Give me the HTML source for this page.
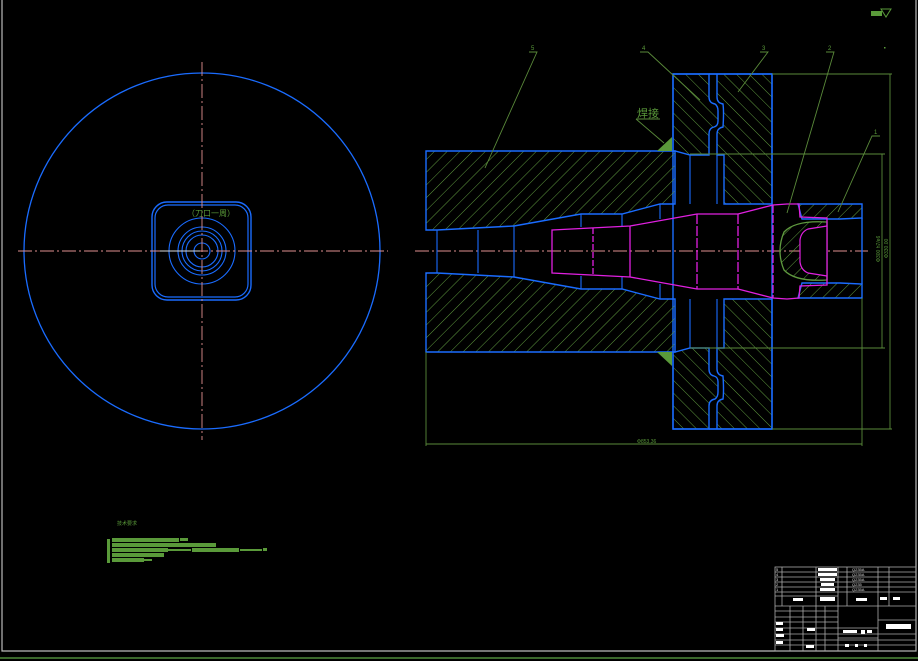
<!DOCTYPE html>
<html><head><meta charset="utf-8"><style>
html,body{margin:0;padding:0;background:#000;width:918px;height:661px;overflow:hidden}
svg{display:block}
text{font-family:"Liberation Sans","Noto Sans CJK SC",sans-serif}
</style></head><body>
<svg width="918" height="661" viewBox="0 0 918 661" xmlns="http://www.w3.org/2000/svg">
<defs>
<pattern id="h" patternUnits="userSpaceOnUse" width="9" height="9" patternTransform="rotate(45)">
<line x1="0" y1="0" x2="0" y2="9" stroke="#5f9a3f" stroke-width="1"/>
</pattern>
<pattern id="h2" patternUnits="userSpaceOnUse" width="9" height="9" patternTransform="rotate(-45)">
<line x1="0" y1="0" x2="0" y2="9" stroke="#5f9a3f" stroke-width="1"/>
</pattern>
</defs>
<rect width="918" height="661" fill="#000"/>
<polyline points="2,0 2,651 916,651 916,0" fill="none" stroke="#bbb" stroke-width="1.2"/>
<line x1="0" y1="658" x2="918" y2="658" stroke="#4f8a3a" stroke-width="1.5"/>

<circle cx="202" cy="251" r="178" fill="none" stroke="#1a6cff" stroke-width="1.3"/>
<rect x="152" y="202" width="99" height="98" rx="15" fill="none" stroke="#1a6cff" stroke-width="1.4"/>
<rect x="155" y="205" width="93" height="92" rx="13" fill="none" stroke="#1a6cff" stroke-width="1.2"/>
<g fill="none" stroke="#1a6cff" stroke-width="1.1">
<circle cx="202" cy="251" r="33"/><circle cx="202" cy="251" r="24"/><circle cx="202" cy="251" r="20"/><circle cx="202" cy="251" r="16"/><circle cx="202" cy="251" r="8"/>
</g>
<line x1="18" y1="251" x2="388" y2="251" stroke="#e09090" stroke-width="0.9" stroke-dasharray="14,3,2,3"/>
<line x1="202" y1="62" x2="202" y2="440" stroke="#e09090" stroke-width="0.9" stroke-dasharray="14,3,2,3"/>
<line x1="160" y1="251" x2="200" y2="251" stroke="#ddd" stroke-width="1"/>
<text x="187" y="216" font-size="8" fill="#5a9a3a">（刀口一周）</text>

<line x1="415" y1="251" x2="868" y2="251" stroke="#e09090" stroke-width="0.9" stroke-dasharray="14,3,2,3"/>
<g stroke="#1a6cff" stroke-width="1.4">
<path d="M673,74 H709 V97 Q709,103 715,104 Q718,106 718,111 V121 Q718,126 714,127 Q709,128 709,134 V155 H690 L675,151 H673 Z" fill="url(#h2)"/>
<path d="M709,74 H772 V204 H724 V155 H717 V134 Q717,128 723,127 Q724,112 723,104 Q717,103 717,97 V74 Z" fill="url(#h2)"/>
<path d="M673,429 H709 V406 Q709,400 715,399 Q718,397 718,392 V382 Q718,377 714,376 Q709,375 709,369 V348 H690 L675,352 H673 Z" fill="url(#h2)"/>
<path d="M709,429 H772 V299 H724 V348 H717 V369 Q717,375 723,376 Q724,391 723,399 Q717,400 717,406 V429 Z" fill="url(#h2)"/>
<rect x="673" y="74" width="99" height="355" fill="none"/>
</g>
<g stroke="#1a6cff" stroke-width="1.4" fill="url(#h)">
<path d="M426,151 H675 V204 H660 L622,214 H581 L514,226 L437,230 H426 Z"/>
<path d="M426,352 H675 V299 H660 L622,289 H581 L514,277 L437,273 H426 Z"/>
</g>
<g stroke="#1a6cff" stroke-width="1.1" fill="none">
<line x1="437" y1="230" x2="437" y2="273"/><line x1="478" y1="230" x2="478" y2="273"/><line x1="514" y1="226" x2="514" y2="277"/>
<line x1="581" y1="214" x2="581" y2="227"/><line x1="581" y1="276" x2="581" y2="289"/>
<line x1="622" y1="214" x2="622" y2="227"/><line x1="622" y1="276" x2="622" y2="289"/>
<line x1="660" y1="204" x2="660" y2="219"/><line x1="660" y1="284" x2="660" y2="299"/>
<line x1="675" y1="155" x2="675" y2="204"/><line x1="675" y1="299" x2="675" y2="348"/>
<line x1="690" y1="155" x2="690" y2="204"/><line x1="690" y1="299" x2="690" y2="348"/>
<line x1="717" y1="155" x2="717" y2="204"/><line x1="717" y1="299" x2="717" y2="348"/>
<line x1="724" y1="204" x2="772" y2="204"/>
</g>
<g stroke="#1a6cff" stroke-width="1.4">
<path d="M798,204 H862 V218 L840,219 H802 Z" fill="url(#h)"/>
<path d="M798,298 H862 V284 L840,283 H802 Z" fill="url(#h)"/>
<line x1="862" y1="218" x2="862" y2="284"/>
</g>
<path d="M827,222 Q795,220 784,232 Q776,251 784,270 Q795,282 827,280 Z" fill="url(#h)" stroke="#5f9a3f" stroke-width="1.3"/>
<path d="M827,226 L808,229 Q801,232 800,240 V262 Q801,270 808,273 L827,276" fill="#000" stroke="#e020e0" stroke-width="1.2"/>
<g stroke="#e020e0" stroke-width="1.3" fill="none">
<path d="M552,230 L630,226 L697,214 L738,214 L773,205 L787,204 L799,204 L800,217 L827,218 V285 L800,286 L799,298 L787,299 L773,298 L738,289 L697,289 L630,277 L552,273 Z"/>
<line x1="593" y1="228" x2="593" y2="275" stroke-dasharray="6,2"/>
<line x1="630" y1="226" x2="630" y2="277"/>
<line x1="697" y1="214" x2="697" y2="289" stroke-dasharray="10,2"/>
<line x1="738" y1="214" x2="738" y2="289" stroke-dasharray="10,2"/>
<line x1="773" y1="205" x2="773" y2="298" stroke-dasharray="8,2"/>
</g>
<polygon points="657,151 672,151 672,137" fill="#5a9a3a"/>
<polygon points="657,352 672,352 672,366" fill="#5a9a3a"/>
<text x="637" y="117" font-size="11" fill="#5a9a3a">焊接</text>
<g stroke="#5a8a3a" stroke-width="0.9" fill="none">
<line x1="636" y1="119" x2="660" y2="119"/><line x1="636" y1="119" x2="664" y2="143"/>
<polyline points="529,52 537,52 485,168"/><polyline points="640,52 648,52 700,100"/>
<polyline points="760,52 768,52 738,92"/><polyline points="826,52 834,52 787,213"/>
<polyline points="880,136 872,136 838,212"/>
<line x1="772" y1="74" x2="892" y2="74"/><line x1="772" y1="429" x2="892" y2="429"/>
<line x1="890" y1="74" x2="890" y2="429"/>
<line x1="690" y1="154" x2="885" y2="154"/><line x1="690" y1="348" x2="885" y2="348"/>
<line x1="882" y1="154" x2="882" y2="348"/>
<line x1="426" y1="352" x2="426" y2="446"/><line x1="862" y1="298" x2="862" y2="446"/>
<line x1="426" y1="444" x2="862" y2="444"/>
</g>
<g fill="#5a9a3a" font-size="6">
<text x="531" y="50">5</text><text x="642" y="50">4</text><text x="762" y="50">3</text><text x="828" y="50">2</text><text x="874" y="134">1</text>
<text x="637" y="443" font-size="5">Φ853.36</text>
</g>
<text x="0" y="0" font-size="5" fill="#5a9a3a" transform="translate(880,262) rotate(-90)">Φ300 h7/e6</text>
<text x="0" y="0" font-size="5" fill="#5a9a3a" transform="translate(888,258) rotate(-90)">Φ330.00</text>

<rect x="871" y="11" width="11" height="5" fill="#5a9a3a"/>
<path d="M881,9 L891,9 L886,17 Z" fill="none" stroke="#5a9a3a" stroke-width="1"/>
<rect x="884" y="47" width="1.5" height="1.5" fill="#5a9a3a"/>

<text x="117" y="525" font-size="5" fill="#5a9a3a">技术要求</text>
<g fill="#5a9a3a">
<rect x="112" y="538" width="67" height="4"/><rect x="180" y="538" width="8" height="3"/>
<rect x="112" y="543" width="104" height="4"/>
<rect x="112" y="548" width="56" height="4"/><rect x="168" y="549" width="23" height="2"/><rect x="192" y="548" width="47" height="4"/><rect x="240" y="549" width="22" height="2"/><rect x="263" y="548" width="4" height="3"/>
<rect x="112" y="553" width="52" height="4"/>
<rect x="112" y="558" width="32" height="4"/><rect x="144" y="559" width="8" height="2"/>
<rect x="107" y="539" width="3" height="24"/>
</g>

<g stroke="#aaa" stroke-width="0.8" fill="none">
<rect x="775" y="567" width="141" height="84"/>
<line x1="775" y1="572" x2="916" y2="572"/><line x1="775" y1="577" x2="916" y2="577"/><line x1="775" y1="582" x2="916" y2="582"/>
<line x1="775" y1="587" x2="916" y2="587"/><line x1="775" y1="592" x2="916" y2="592"/><line x1="775" y1="596" x2="838" y2="596"/>
<line x1="775" y1="606" x2="916" y2="606"/><line x1="775" y1="611" x2="838" y2="611"/><line x1="775" y1="617" x2="838" y2="617"/>
<line x1="775" y1="622" x2="838" y2="622"/><line x1="775" y1="628" x2="838" y2="628"/><line x1="775" y1="634" x2="916" y2="634"/>
<line x1="775" y1="640" x2="916" y2="640"/><line x1="775" y1="645" x2="916" y2="645"/>
<line x1="838" y1="628" x2="878" y2="628"/><line x1="838" y1="638" x2="878" y2="638"/><line x1="878" y1="620" x2="916" y2="620"/>
<line x1="782" y1="567" x2="782" y2="606"/><line x1="816" y1="567" x2="816" y2="651"/><line x1="838" y1="567" x2="838" y2="651"/>
<line x1="847" y1="567" x2="847" y2="606"/><line x1="878" y1="567" x2="878" y2="651"/><line x1="889" y1="567" x2="889" y2="606"/>
<line x1="790" y1="606" x2="790" y2="651"/><line x1="803" y1="606" x2="803" y2="651"/><line x1="825" y1="606" x2="825" y2="651"/>
</g>
<g fill="#fff">
<rect x="818" y="568" width="19" height="3"/><rect x="818" y="573" width="19" height="3"/><rect x="820" y="578" width="15" height="3"/>
<rect x="821" y="583" width="13" height="3"/><rect x="820" y="588" width="15" height="3"/><rect x="820" y="597" width="15" height="4"/>
<rect x="793" y="598" width="10" height="3"/><rect x="856" y="598" width="11" height="3"/><rect x="880" y="597" width="7" height="3"/><rect x="893" y="597" width="7" height="3"/>
<rect x="886" y="624" width="25" height="5"/><rect x="843" y="630" width="14" height="3"/><rect x="861" y="630" width="4" height="4"/><rect x="867" y="630" width="5" height="3"/>
<rect x="776" y="622" width="7" height="3"/><rect x="776" y="628" width="7" height="3"/><rect x="776" y="634" width="8" height="3"/><rect x="776" y="641" width="7" height="3"/>
<rect x="807" y="628" width="8" height="3"/><rect x="806" y="645" width="8" height="3"/><rect x="845" y="644" width="4" height="3"/><rect x="855" y="644" width="3" height="3"/><rect x="864" y="644" width="3" height="3"/>
</g>
<g fill="#ddd" font-size="4">
<text x="776" y="571">5</text><text x="776" y="576">4</text><text x="776" y="581">3</text><text x="776" y="586">2</text><text x="776" y="591">1</text>
<text x="852" y="571">Q235A</text><text x="852" y="576">Q235A</text><text x="852" y="581">Q235A</text><text x="852" y="586">Q235</text><text x="852" y="591">Q235A</text>
</g>
</svg>
</body></html>
